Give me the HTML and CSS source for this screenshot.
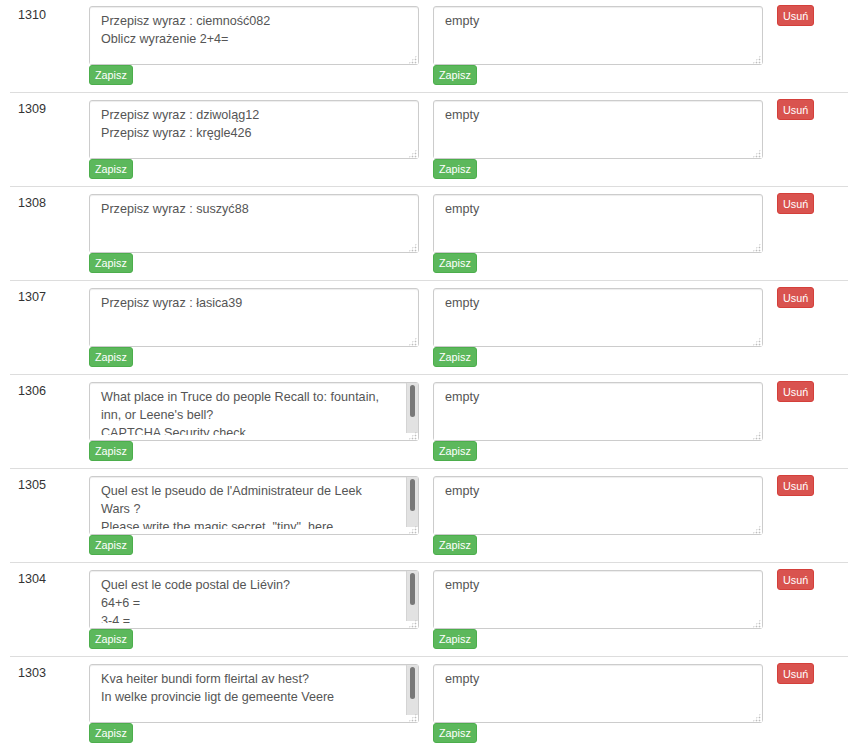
FILE: index.html
```html
<!DOCTYPE html>
<html>

<head>
    <title>Zgłoszenia</title>
    <link rel="stylesheet" href="styles.css">
</head>

<body>
    <div class="entries">
        <div class="entry-row">
            <div class="entry-id">1310</div>
            <div class="entry-field">
                <textarea class="entry-text">Przepisz wyraz : ciemność082
Oblicz wyrażenie 2+4=</textarea>
                <button class="btn btn-save">Zapisz</button>
            </div>
            <div class="entry-field">
                <textarea class="entry-text">empty</textarea>
                <button class="btn btn-save">Zapisz</button>
            </div>
            <div class="entry-actions"><button class="btn btn-delete">Usuń</button></div>
        </div>

        <div class="entry-row">
            <div class="entry-id">1309</div>
            <div class="entry-field">
                <textarea class="entry-text">Przepisz wyraz : dziwoląg12
Przepisz wyraz : kręgle426</textarea>
                <button class="btn btn-save">Zapisz</button>
            </div>
            <div class="entry-field">
                <textarea class="entry-text">empty</textarea>
                <button class="btn btn-save">Zapisz</button>
            </div>
            <div class="entry-actions"><button class="btn btn-delete">Usuń</button></div>
        </div>

        <div class="entry-row">
            <div class="entry-id">1308</div>
            <div class="entry-field">
                <textarea class="entry-text">Przepisz wyraz : suszyć88</textarea>
                <button class="btn btn-save">Zapisz</button>
            </div>
            <div class="entry-field">
                <textarea class="entry-text">empty</textarea>
                <button class="btn btn-save">Zapisz</button>
            </div>
            <div class="entry-actions"><button class="btn btn-delete">Usuń</button></div>
        </div>

        <div class="entry-row">
            <div class="entry-id">1307</div>
            <div class="entry-field">
                <textarea class="entry-text">Przepisz wyraz : łasica39</textarea>
                <button class="btn btn-save">Zapisz</button>
            </div>
            <div class="entry-field">
                <textarea class="entry-text">empty</textarea>
                <button class="btn btn-save">Zapisz</button>
            </div>
            <div class="entry-actions"><button class="btn btn-delete">Usuń</button></div>
        </div>

        <div class="entry-row">
            <div class="entry-id">1306</div>
            <div class="entry-field">
                <textarea class="entry-text scrolled">What place in Truce do people Recall to: fountain, inn, or Leene's bell?
CAPTCHA Security check

 </textarea>
                <div class="scrollbar"><div class="scroll-thumb"></div></div>
                <button class="btn btn-save">Zapisz</button>
            </div>
            <div class="entry-field">
                <textarea class="entry-text">empty</textarea>
                <button class="btn btn-save">Zapisz</button>
            </div>
            <div class="entry-actions"><button class="btn btn-delete">Usuń</button></div>
        </div>

        <div class="entry-row">
            <div class="entry-id">1305</div>
            <div class="entry-field">
                <textarea class="entry-text scrolled">Quel est le pseudo de l'Administrateur de Leek Wars ?
Please write the magic secret, "tiny", here

 </textarea>
                <div class="scrollbar"><div class="scroll-thumb"></div></div>
                <button class="btn btn-save">Zapisz</button>
            </div>
            <div class="entry-field">
                <textarea class="entry-text">empty</textarea>
                <button class="btn btn-save">Zapisz</button>
            </div>
            <div class="entry-actions"><button class="btn btn-delete">Usuń</button></div>
        </div>

        <div class="entry-row">
            <div class="entry-id">1304</div>
            <div class="entry-field">
                <textarea class="entry-text scrolled">Quel est le code postal de Liévin?
64+6 =
3-4 =

 </textarea>
                <div class="scrollbar"><div class="scroll-thumb"></div></div>
                <button class="btn btn-save">Zapisz</button>
            </div>
            <div class="entry-field">
                <textarea class="entry-text">empty</textarea>
                <button class="btn btn-save">Zapisz</button>
            </div>
            <div class="entry-actions"><button class="btn btn-delete">Usuń</button></div>
        </div>

        <div class="entry-row">
            <div class="entry-id">1303</div>
            <div class="entry-field">
                <textarea class="entry-text scrolled">Kva heiter bundi form fleirtal av hest?
In welke provincie ligt de gemeente Veere


 </textarea>
                <div class="scrollbar"><div class="scroll-thumb"></div></div>
                <button class="btn btn-save">Zapisz</button>
            </div>
            <div class="entry-field">
                <textarea class="entry-text">empty</textarea>
                <button class="btn btn-save">Zapisz</button>
            </div>
            <div class="entry-actions"><button class="btn btn-delete">Usuń</button></div>
        </div>
    </div>
</body>

</html>
```

FILE: styles.css
```css
html {
    overflow: hidden;
}

body {
    margin: 0;
    padding-left: 10px;
    font-family: "Liberation Sans", Arial, sans-serif;
    font-size: 12.6px;
    line-height: 18px;
    color: #333;
    background-color: #fff;
}

.entries {
    margin-top: -2px;
}

.entry-row {
    display: flex;
    border-top: 1px solid #ddd;
    padding: 7px 0;
}

.entry-id {
    width: 79px;
    box-sizing: border-box;
    padding-left: 8px;
}

.entry-field {
    position: relative;
    width: 330px;
    margin-right: 14px;
}

/* text is cut off above the bottom padding */
.entry-field::before {
    content: "";
    position: absolute;
    top: 53px;
    left: 1px;
    width: 328px;
    height: 5px;
    background-color: #fff;
}

/* resize grip in the textarea corner */
.entry-field::after {
    content: "";
    position: absolute;
    top: 49px;
    left: 319px;
    width: 9px;
    height: 9px;
    background-image: radial-gradient(circle, #bdbdbd 0.75px, transparent 1.1px);
    background-size: 3px 3px;
    clip-path: polygon(100% 0, 100% 100%, 0 100%);
}

.entry-text {
    display: block;
    box-sizing: border-box;
    width: 330px;
    height: 59px;
    margin: 0;
    padding: 5px 11px;
    font-family: "Liberation Sans", Arial, sans-serif;
    font-size: 12.6px;
    line-height: 18px;
    color: #555;
    background-color: #fff;
    border: 1px solid #ccc;
    border-radius: 3px;
    box-shadow: inset 0 1px 1px rgba(0, 0, 0, .075);
    overflow: hidden;
    resize: none;
}

.entry-text.scrolled {
    padding-right: 29px;
}

.scrollbar {
    position: absolute;
    top: 1px;
    left: 317px;
    width: 12px;
    height: 50px;
    box-sizing: border-box;
    background-color: #e2e2e2;
    border-left: 1px solid #d4d4d4;
}

.scroll-thumb {
    width: 5px;
    height: 32px;
    margin: 2px 0 0 3px;
    background-color: #787878;
    border-radius: 3px;
}

.btn {
    display: inline-block;
    box-sizing: border-box;
    height: 20px;
    margin: 0;
    padding: 1px 5px;
    font-family: "Liberation Sans", Arial, sans-serif;
    font-size: 10.8px;
    line-height: 16px;
    color: #fff;
    border: 1px solid transparent;
    border-radius: 3px;
    cursor: pointer;
}

.btn-save {
    display: block;
    background-color: #5cb85c;
    border-color: #4cae4c;
}

.btn-delete {
    height: 21px;
    margin-top: -1px;
    background-color: #d9534f;
    border-color: #d43f3a;
}
```
